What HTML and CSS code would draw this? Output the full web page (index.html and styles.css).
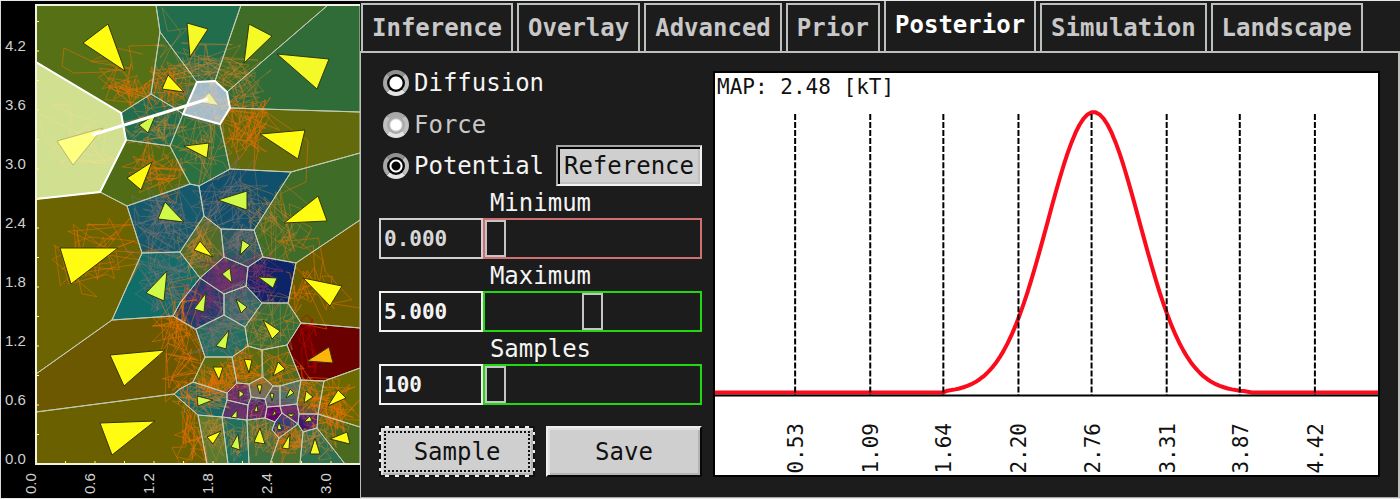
FILE: index.html
```html
<!DOCTYPE html>
<html lang="en">
<head>
<meta charset="utf-8">
<title>Posterior</title>
<link rel="stylesheet" href="styles.css">
</head>
<body>
<main class="app">
  <svg class="map" viewBox="0 1 360 497" role="img" aria-label="Voronoi map of inferred forces">
    <defs><clipPath id="frame"><rect x="36" y="5" width="324" height="459"/></clipPath></defs>
    <g clip-path="url(#frame)">
      <g id="cells"></g>
      <g id="traces"></g>
      <g id="edges"></g>
      <g id="arrows"></g>
      <g id="selection"></g>
    </g>
    <path class="map-axis" d="M360 5H36V464H360"/>
    <g id="ticks"></g>
    <g id="map-labels"></g>
  </svg>
  <section class="side">
    <nav class="tabs" role="tablist">
      <button class="tab" role="tab">Inference</button>
      <button class="tab" role="tab">Overlay</button>
      <button class="tab" role="tab">Advanced</button>
      <button class="tab" role="tab">Prior</button>
      <button class="tab tab-active" role="tab" aria-selected="true">Posterior</button>
      <button class="tab" role="tab">Simulation</button>
      <button class="tab" role="tab">Landscape</button>
    </nav>
    <div class="pane">
      <form class="controls">
        <div class="row"><label class="choice"><input class="radio" type="radio" name="kind">Diffusion</label></div>
        <div class="row"><label class="choice choice-off"><input class="radio" type="radio" name="kind" disabled>Force</label></div>
        <div class="row"><label class="choice"><input class="radio" type="radio" name="kind" checked>Potential</label><button class="reference" type="button">Reference</button></div>
        <label class="caption" for="minimum">Minimum</label>
        <div class="field field-off">
          <input class="entry" id="minimum" type="text" value="0.000">
          <input class="slider" type="range" min="0" max="10" value="0" aria-label="Minimum slider">
        </div>
        <label class="caption" for="maximum">Maximum</label>
        <div class="field">
          <input class="entry" id="maximum" type="text" value="5.000">
          <input class="slider" type="range" min="0" max="10" value="5" aria-label="Maximum slider">
        </div>
        <label class="caption" for="samples">Samples</label>
        <div class="field">
          <input class="entry" id="samples" type="text" value="100">
          <input class="slider" type="range" min="100" max="1000" value="100" aria-label="Samples slider">
        </div>
        <div class="actions">
          <button class="action action-focus" type="button">Sample</button>
          <button class="action" type="button">Save</button>
        </div>
      </form>
      <svg class="chart" viewBox="0 0 662 401" role="img" aria-label="Posterior distribution">
        <path class="curve" id="curve"/>
        <path class="baseline" d="M0 322H662"/>
        <g id="grid"></g>
        <text class="chart-text" x="2" y="21">MAP: 2.48 [kT]</text>
      </svg>
    </div>
  </section>
</main>
<script src="plot.js"></script>
</body>
</html>
```
FILE: styles.css
```css
* { box-sizing: border-box; }
body {
  margin: 0;
  background: #1c1c1c;
  color: #f4f4f4;
  font: 24px/28px "DejaVu Sans Mono", monospace;
}
button, input { font: inherit; color: inherit; margin: 0; border-radius: 0; }
.app {
  display: grid;
  grid-template-columns: 9fr 26fr;
  align-items: stretch;
  border-top: 1px solid #e8e8e8;
  border-bottom: 1px solid #e8e8e8;
}

/* Map */
.map { display: block; width: 100%; background: #000; box-shadow: inset 1px 0 #d8d8d8; }
.map-axis { fill: none; stroke: #f2f2e0; stroke-width: 2; }
.tick { stroke: #ffff70; stroke-width: 1; }
.map-text { font: 15px "Liberation Sans", Arial, sans-serif; fill: #d0d0d0; }
.edge { fill: none; stroke: #c4ccb4; stroke-width: 1; }
.trace { fill: none; stroke-width: 1; }
.arrow { stroke: #35350a; stroke-width: 1; }
.selected { fill: #fff; fill-opacity: .55; stroke: #fff; stroke-width: 2; }
.selected-wide { fill: #f2ffb4; fill-opacity: .78; stroke: #fff; stroke-width: 2; }
.link { stroke: #fff; stroke-width: 3; }

/* Tabs */
.side { display: flex; flex-direction: column; min-width: 0; }
.tabs { display: flex; gap: 4px; height: 50px; padding-left: 1px; }
.tab {
  margin-top: 2px;
  padding: 0 9px;
  border: 2px solid #bcc0bc;
  border-bottom: 0;
  background: #1c1c1c;
  color: #c8c8c8;
  font-weight: bold;
}
.tab-active {
  position: relative;
  margin: 0;
  padding-bottom: 2px;
  border-top: 0;
  color: #fff;
}
.pane {
  flex: 1;
  display: flex;
  gap: 11px;
  padding: 9px 18px 20px 18px;
  border: 2px solid #bcc0bc;
  border-left-width: 1px;
  border-bottom: 1px solid #aaa;
}
.controls { flex: 0 0 323px; }
.row { display: flex; align-items: center; justify-content: space-between; height: 41px; }
.row:first-child { height: 42px; }
.choice { display: flex; align-items: center; gap: 5px; padding-left: 4px; }
.choice-off { color: #c8c8c8; }
.radio {
  appearance: none;
  width: 26px;
  height: 26px;
  border: 4px solid #b8b8b8;
  border-color: #909090 #c0c0c0 #e4e4e4 #a8a8a8;
  border-radius: 50%;
  background: radial-gradient(circle, #fff 0 6px, #080808 7px);
}
.radio:checked { background: radial-gradient(circle, #080808 0 4px, #fff 5px 6px, #080808 7px); }
.radio:disabled { border-color: #a8a8a8 #c0c0c0 #e4e4e4; background: radial-gradient(circle, #fff 0 5px, #aaa 7px); }
.reference {
  height: 41px;
  padding: 0 6px 0 6px;
  border: 2px solid #f2f2f2;
  border-top-color: #a4a4a4;
  border-left-color: #a4a4a4;
  box-shadow: inset 2px 2px #000, inset -2px -2px #c0c0c0;
  background: #cfcfcf;
  color: #111;
}
.caption { display: block; height: 32px; line-height: 34px; text-align: center; }
.field { display: flex; height: 41px; }
.entry {
  width: 104px;
  padding: 0 3px;
  border: 2px solid #f2f2f2;
  background: transparent;
  font-size: 21px;
  font-weight: bold;
}
.field-off .entry { border-color: #d0d0d0; color: #d8d8d8; }
.slider {
  appearance: none;
  flex: 1;
  min-width: 0;
  height: 41px;
  border: 2px solid #22d810;
  background: transparent;
}
.field-off .slider { border-color: #d07070; }
.slider::-webkit-slider-thumb {
  appearance: none;
  width: 21px;
  height: 37px;
  border: 2px solid #c4c4c4;
  background: #1c1c1c;
}
.actions { display: grid; grid-template-columns: 1fr 1fr; gap: 11px; margin-top: 21px; }
.action {
  height: 51px;
  padding: 0;
  border: 2px solid #080808;
  border-top-color: #eee;
  border-left-color: #eee;
  box-shadow: inset 2px 2px #e0e0e0, inset -2px -2px #b4b4b4;
  background: #cfcfcf;
  color: #111;
}
.action-focus {
  border: 2px dashed #111;
  outline: 2px dotted #111;
  outline-offset: -7px;
  background: linear-gradient(#cfcfcf, #cfcfcf) padding-box, #eee border-box;
}

/* Chart */
.chart { flex: 1; min-width: 0; align-self: flex-end; border: 2px solid #000; background: #fff; }
.curve { fill: none; stroke: #fa0c1c; stroke-width: 4; stroke-linejoin: round; }
.baseline { stroke: #000; stroke-width: 2; }
.gridline { stroke: #000; stroke-width: 2; stroke-dasharray: 6 2; }
.chart-text { font-size: 21px; fill: #111; }
```
FILE: plot.js
```js
const NS = "http://www.w3.org/2000/svg";
function add(parent, name, attrs, text) {
  const el = document.createElementNS(NS, name);
  for (const key in attrs) el.setAttribute(key, attrs[key]);
  if (text) el.textContent = text;
  document.getElementById(parent).appendChild(el);
}

// Voronoi cells: fill, vertices
const cells = [
  ["#567115", "36,5 156,5 160,32 151,94 121,113 36,62"],
  ["#5c6c14", "36,62 121,113 126,140 100,192 36,199"],
  ["#6b6400", "36,199 100,192 127,206 142,253 112,320 36,374"],
  ["#6b5800", "36,374 112,320 173,316 196,330 205,357 193,382 180,389 174,394 36,412"],
  ["#6b6000", "36,412 174,394 198,415 207,464 36,464"],
  ["#226d4c", "156,5 241,5 215,81 197,82 180,59 160,32"],
  ["#3f6c26", "241,5 328,5 227,92 215,81"],
  ["#2f6c38", "328,5 360,5 360,112 230,108 227,92"],
  ["#636a0c", "230,108 360,112 360,153 291,172 230,169 220,124"],
  ["#3c7030", "160,32 180,59 197,82 183,114 176,109 151,94"],
  ["#2c6a88", "197,82 215,81 227,92 230,108 220,124 183,114"],
  ["#226d50", "121,113 151,94 176,109 183,114 170,146 126,140"],
  ["#506c14", "126,140 170,146 181,168 190,184 180,188 127,206 100,192"],
  ["#2a7040", "183,114 220,124 230,169 199,186 190,184 170,146"],
  ["#155a6c", "127,206 190,184 199,186 204,216 180,252 142,253"],
  ["#10506c", "199,186 230,169 291,172 254,230 221,229 204,216"],
  ["#3f6c26", "291,172 360,153 360,220 296,263 263,257 254,230"],
  ["#6b5c00", "360,220 360,328 301,323 288,303 296,263"],
  ["#506c2a", "204,216 221,229 224,257 200,278 180,252"],
  ["#2c5a64", "221,229 254,230 263,257 248,267 224,257"],
  ["#0f6d6a", "142,253 180,252 200,278 180,303 173,316 112,320"],
  ["#403768", "224,257 248,267 246,286 224,294 200,278"],
  ["#0c2468", "263,257 296,263 288,303 262,303 246,286 248,267"],
  ["#1a3f6c", "200,278 224,294 224,315 196,329 173,316 180,303"],
  ["#2c6a6a", "224,294 246,286 262,303 245,327 224,315"],
  ["#207060", "196,329 224,315 245,327 248,346 232,357 205,357"],
  ["#367038", "262,303 288,303 301,323 287,345 262,350 248,346 245,327"],
  ["#6b0000", "301,323 360,328 360,368 324,381 301,380 287,345"],
  ["#5d6c10", "205,357 232,357 237,383 227,393 193,382"],
  ["#5d6c10", "232,357 248,346 262,350 262,377 249,384 237,383"],
  ["#4c6c1c", "262,350 287,345 301,380 280,386 273,386 263,377"],
  ["#176a68", "180,389 193,382 227,393 227,400 222,417 198,415 174,394"],
  ["#58306a", "237,383 249,384 251,397 248,405 227,400 227,393"],
  ["#7a7040", "249,384 263,377 273,386 265,399 251,397"],
  ["#606868", "273,386 280,386 280,406 267,407 265,399"],
  ["#507468", "280,386 301,380 297,404 280,406"],
  ["#5d6c18", "301,380 324,381 318,414 299,414 297,404"],
  ["#6b6a00", "324,381 360,368 360,427 318,414"],
  ["#50346c", "227,400 248,405 247,420 222,417"],
  ["#4a226c", "248,405 251,397 265,399 267,407 265,418 247,420"],
  ["#6b006b", "267,407 280,406 282,413 275,422 265,418"],
  ["#5a2a6c", "280,406 297,404 299,414 298,424 282,413"],
  ["#3a1a68", "299,414 318,414 317,428 303,432 298,424"],
  ["#34407c", "282,413 298,424 279,438 272,430 275,422"],
  ["#5a7a30", "198,415 222,417 228,464 207,464"],
  ["#1f7060", "222,417 247,420 249,464 228,464"],
  ["#3f7040", "247,420 265,418 275,422 272,430 279,438 270,464 249,464"],
  ["#4a7030", "279,438 298,424 303,432 300,464 270,464"],
  ["#2f7050", "303,432 317,428 345,464 300,464"],
  ["#4a6a20", "318,414 360,427 360,464 345,464 317,428"]
];
cells.forEach(([fill, points]) => {
  add("cells", "polygon", { fill, points });
  add("edges", "polygon", { class: "edge", points });
});

// Particle traces: centre, spread, number of steps, colour
let seed = 7;
function rand() {
  seed = (seed * 16807) % 2147483647;
  return seed / 2147483647 - 0.5;
}
const hot = "rgba(232,112,4,.55)", warm = "rgba(205,130,44,.42)", dim = "rgba(120,112,112,.5)";
const violet = "rgba(125,50,110,.5)", red = "rgba(190,0,0,.6)";
const clusters = [
  [128, 88, 24, 20, 44, hot], [110, 70, 44, 24, 12, hot], [75, 140, 34, 32, 28, hot],
  [170, 86, 19, 22, 70, hot], [165, 45, 20, 30, 10, warm], [152, 122, 26, 22, 70, warm],
  [155, 170, 26, 28, 65, hot], [208, 68, 36, 19, 85, warm], [239, 78, 26, 26, 60, warm],
  [208, 104, 24, 20, 90, dim], [244, 127, 26, 26, 85, hot], [201, 147, 26, 34, 75, warm],
  [160, 222, 32, 34, 100, dim], [226, 205, 36, 36, 85, dim], [272, 226, 32, 38, 60, warm],
  [100, 250, 46, 34, 60, hot], [203, 249, 20, 24, 90, warm], [242, 243, 18, 18, 80, dim],
  [165, 278, 34, 36, 80, dim], [226, 276, 22, 18, 120, violet], [260, 278, 22, 24, 70, violet],
  [201, 303, 24, 24, 100, violet], [239, 306, 20, 20, 85, dim], [223, 336, 27, 24, 75, dim],
  [268, 326, 26, 26, 60, warm], [310, 284, 28, 34, 44, hot], [313, 350, 12, 32, 26, red],
  [176, 340, 26, 44, 60, hot], [185, 384, 24, 34, 40, hot], [215, 379, 21, 18, 80, hot],
  [247, 371, 20, 19, 75, hot], [277, 370, 22, 22, 55, hot], [203, 400, 24, 14, 55, warm],
  [239, 393, 11, 11, 70, violet], [261, 396, 14, 12, 60, dim], [238, 412, 13, 8, 60, violet],
  [258, 411, 10, 9, 60, violet], [286, 410, 16, 11, 70, violet], [309, 418, 12, 11, 60, violet],
  [311, 394, 19, 20, 50, hot], [333, 410, 21, 24, 85, hot], [189, 440, 18, 32, 45, hot],
  [214, 437, 16, 23, 65, warm], [238, 437, 13, 22, 50, warm], [261, 437, 16, 23, 55, warm],
  [289, 440, 18, 19, 60, hot], [316, 438, 20, 18, 55, warm]
];
clusters.forEach(([cx, cy, rx, ry, n, stroke]) => {
  let x = cx, y = cy, d = `M${cx} ${cy}`;
  for (let i = 0; i < n; i++) {
    x = x * 0.35 + cx * 0.65 + (rand() + rand() + rand()) * rx * 1.05;
    y = y * 0.35 + cy * 0.65 + (rand() + rand() + rand()) * ry * 1.05;
    d += `L${x.toFixed(1)} ${y.toFixed(1)}`;
  }
  add("traces", "path", { class: "trace", stroke, d });
});
add("traces", "path", { class: "trace", stroke: hot, d: "M130 68L93 62L64 48L62 66L74 73L105 72L130 68M230 108L263 110L308 141L306 182L280 194L282 211L312 228L302 247M328 303L360 308M133 70L129 46L164 45" });

// Force arrows: fill, vertices
const yellow = "#fffc12", lemon = "#f4fa28", lime = "#d0fa48";
const arrows = [
  [yellow, "108,24 83,43 125,71"], [yellow, "57,141 103,128 73,165"],
  [yellow, "168,75 162,89 184,92"], [lime, "139,125 156,114 148,133"],
  [yellow, "152,162 127,178 141,190"], [lime, "165,202 158,219 184,222"],
  [yellow, "60,248 118,248 71,284"], [lemon, "187,23 208,29 190,57"],
  [lemon, "249,24 272,36 244,63"], [lemon, "277,54 329,59 317,89"],
  [yellow, "209,93 200,102 218,105"], [lemon, "184,146 209,143 207,158"],
  [yellow, "260,134 305,130 298,159"], [lime, "218,200 247,191 247,210"],
  [yellow, "318,196 284,223 327,221"], [yellow, "200,241 194,250 213,257"],
  [lime, "242,240 250,245 240,255"], [lime, "167,271 146,293 164,301"],
  [yellow, "165,350 110,355 124,386"], [yellow, "155,421 100,423 112,455"],
  [lime, "206,293 194,309 204,312"], [lime, "222,274 230,268 232,283"],
  [lime, "258,277 277,278 273,288"], [lime, "236,299 247,307 241,313"],
  [lime, "229,330 216,346 226,349"], [lemon, "263,320 280,331 272,339"],
  [yellow, "303,278 342,286 330,306"], ["#ffb40c", "307,361 329,347 333,363"],
  [yellow, "213,367 223,367 219,380"], [yellow, "244,359 252,360 249,373"],
  [yellow, "278,362 285,369 273,376"], [lime, "197,396 213,400 198,406"],
  [lime, "239,390 244,394 239,398"], [lemon, "257,385 262,385 260,394"],
  [lime, "270,393 274,394 272,401"], [lime, "290,389 294,393 286,398"],
  [lemon, "306,391 313,397 304,403"], [yellow, "338,390 346,398 328,406"],
  [lime, "237,410 237,418 231,417"], [lime, "257,405 258,412 254,411"],
  [lime, "275,410 276,414 272,416"], [lime, "287,414 295,414 291,417"],
  [lime, "310,416 312,421 304,422"], [lime, "279,422 282,430 277,429"],
  [yellow, "221,431 207,437 213,444"], [lime, "238,434 231,447 240,450"],
  [lemon, "260,428 254,442 265,444"], [lemon, "290,434 282,448 289,449"],
  [lemon, "315,438 310,454 320,454"], [yellow, "347,432 330,439 350,444"]
];
arrows.forEach(([fill, points]) => add("arrows", "polygon", { class: "arrow", fill, points }));

add("selection", "polygon", { class: "selected-wide", points: cells[1][1] });
add("selection", "polygon", { class: "selected", points: cells[10][1] });
add("selection", "polygon", { fill: "#ffff80", stroke: "#b8b878", points: "57,141 103,128 73,165" });
add("selection", "polygon", { fill: "#f0f0a0", points: "209,93 200,102 218,105" });
add("selection", "line", { class: "link", x1: 92, y1: 135, x2: 208, y2: 99 });

// Map axes
for (let k = 1; k < 16; k++) {
  const y = 464 - k * 29.5, x = 36 + k * 29.5;
  add("ticks", "path", { class: "tick", d: `M36 ${y}h3` });
  if (x < 360) add("ticks", "path", { class: "tick", d: `M${x} 464v-3` });
}
["0.0", "0.6", "1.2", "1.8", "2.4", "3.0", "3.6", "4.2"].forEach((label, i) => {
  add("map-labels", "text", { class: "map-text", x: 5, y: 464 - i * 59 }, label);
  if (i < 6) add("map-labels", "text", { class: "map-text", transform: `translate(${36 + i * 59} 494) rotate(-90)` }, label);
});

// Posterior density
let curve = "M0 319L228 319";
for (let x = 232; x <= 528; x += 4) {
  const z = (x - 378) / 46;
  curve += `L${x} ${(319 - 280 * Math.exp(-z * z / 2)).toFixed(1)}`;
}
document.getElementById("curve").setAttribute("d", curve + "L536 319L662 319");
[[80, "0.53"], [155, "1.09"], [228, "1.64"], [303, "2.20"], [376, "2.76"], [451, "3.31"], [524, "3.87"], [599, "4.42"]].forEach(([x, label]) => {
  add("grid", "path", { class: "gridline", d: `M${x} 41V322` });
  add("grid", "text", { class: "chart-text", transform: `translate(${x + 8} 400) rotate(-90)` }, label);
});
```
